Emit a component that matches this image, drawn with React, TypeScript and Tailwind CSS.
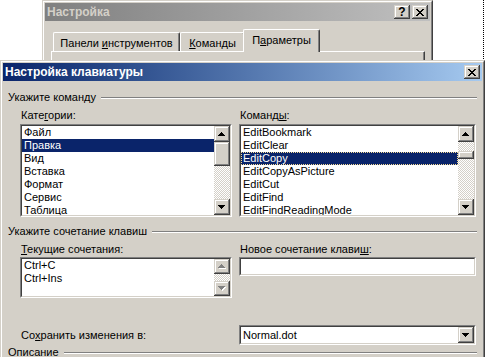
import React from "react";

const raised =
  "bg-[#d4d0c8] shadow-[inset_-1px_-1px_#404040,inset_1px_1px_#d4d0c8,inset_-2px_-2px_#808080,inset_2px_2px_#fff]";
const dither =
  "bg-[image:repeating-conic-gradient(#d4d0c8_0_25%,#fff_0_50%)] bg-size-[2px_2px]";

const UP = "M3 0h1v1H3zM2 1h3v1H2zM1 2h5v1H1zM0 3h7v1H0z";
const DOWN = "M0 0h7v1H0zM1 1h5v1H1zM2 2h3v1H2zM3 3h1v1H3z";

function Arrow({ up, disabled }: { up?: boolean; disabled?: boolean }) {
  const d = up ? UP : DOWN;
  return (
    <svg width="8" height="5" viewBox="0 0 8 5" shapeRendering="crispEdges">
      {disabled && <path d={d} fill="#fff" transform="translate(1 1)" />}
      <path d={d} fill={disabled ? "#808080" : "#000"} />
    </svg>
  );
}

function CloseGlyph() {
  return (
    <svg width="8" height="7" viewBox="0 0 8 7" shapeRendering="crispEdges">
      <path
        d="M0 0h2v1H0zM6 0h2v1H6zM1 1h2v1H1zM5 1h2v1H5zM2 2h4v1H2zM3 3h2v1H3zM2 4h4v1H2zM1 5h2v1H1zM5 5h2v1H5zM0 6h2v1H0zM6 6h2v1H6z"
        fill="#000"
      />
    </svg>
  );
}

function TitleBtn({ children }: { children: React.ReactNode }) {
  return (
    <div className={`${raised} flex h-[14px] w-[16px] items-center justify-center`}>
      {children}
    </div>
  );
}

function Window({ className, children }: { className: string; children: React.ReactNode }) {
  return (
    <div
      className={`absolute border border-t-[#d4d0c8] border-l-[#d4d0c8] border-r-[#404040] border-b-[#404040] bg-[#d4d0c8] ${className}`}
    >
      <div className="flex h-full flex-col border border-t-white border-l-white border-r-[#808080] border-b-[#808080] p-px">
        {children}
      </div>
    </div>
  );
}

function Tab({ className, active, children }: { className: string; active?: boolean; children: React.ReactNode }) {
  return (
    <div
      className={`flex shrink-0 items-center justify-center rounded-t-[2px] border-t border-l border-r border-t-white border-l-white border-r-[#404040] bg-[#d4d0c8] shadow-[inset_-1px_0_#808080] ${
        active ? "relative z-10 -mx-[2px] -mb-px h-[23px] pb-[2px]" : "h-[19px] pt-[2px]"
      } ${className}`}
    >
      <span className="whitespace-nowrap">{children}</span>
    </div>
  );
}

function Sunken({ className = "", children }: { className?: string; children?: React.ReactNode }) {
  return (
    <div className={`border border-t-[#808080] border-l-[#808080] border-r-white border-b-white ${className}`}>
      <div className="flex h-full border border-t-[#404040] border-l-[#404040] border-r-[#d4d0c8] border-b-[#d4d0c8] bg-white">
        {children}
      </div>
    </div>
  );
}

function ScrollBar({
  before,
  thumb,
  disabled,
  btn = "h-[16px]",
}: {
  before?: string;
  thumb?: string;
  disabled?: boolean;
  btn?: string;
}) {
  return (
    <div className="flex w-[16px] shrink-0 flex-col">
      <div className={`${raised} ${btn} flex shrink-0 items-center justify-center`}>
        <Arrow up disabled={disabled} />
      </div>
      {before && <div className={`${dither} ${before} shrink-0`} />}
      {thumb && <div className={`${raised} ${thumb} shrink-0`} />}
      <div className={`${dither} flex-1`} />
      <div className={`${raised} ${btn} flex shrink-0 items-center justify-center`}>
        <Arrow disabled={disabled} />
      </div>
    </div>
  );
}

function Rows({ items, selected, focused }: { items: string[]; selected?: number; focused?: boolean }) {
  return (
    <div className="min-w-0 flex-1 overflow-hidden">
      {items.map((t, i) => (
        <div
          key={t}
          className={`h-[13px] whitespace-nowrap pl-[2px] ${i === selected ? "bg-[#0a246a] text-white" : ""} ${
            i === selected && focused ? "outline-1 -outline-offset-1 outline-dotted outline-[#f5db95]" : ""
          }`}
        >
          {t}
        </div>
      ))}
    </div>
  );
}

function Section({ label, className = "" }: { label: string; className?: string }) {
  return (
    <div className={`flex h-[13px] items-center ${className}`}>
      <span className="pr-[5px]">{label}</span>
      <div className="h-[2px] flex-1 border-t border-b border-t-[#808080] border-b-white" />
    </div>
  );
}

const categories = ["Файл", "Правка", "Вид", "Вставка", "Формат", "Сервис", "Таблица"];
const commands = [
  "EditBookmark",
  "EditClear",
  "EditCopy",
  "EditCopyAsPicture",
  "EditCut",
  "EditFind",
  "EditFindReadingMode",
];

export default function App() {
  return (
    <div className="relative h-[357px] w-[486px] overflow-hidden bg-white font-['Liberation_Sans',Arial,sans-serif] text-[11px] leading-[13px] text-black">
      {/* Настройка (background dialog) */}
      <Window className="left-[42px] top-0 h-[150px] w-[391px]">
        <div className="flex h-[18px] shrink-0 items-center bg-linear-to-r from-[#808080] to-[#c0c0c0] px-[2px]">
          <span className="flex-1 text-[12px] font-bold text-[#d4d0c8]">Настройка</span>
          <div className="flex gap-[2px]">
            <TitleBtn>
              <span className="text-[12px] font-bold leading-none">?</span>
            </TitleBtn>
            <TitleBtn>
              <CloseGlyph />
            </TitleBtn>
          </div>
        </div>
        <div className="flex-1 pt-[8px] pl-[6px] pr-[5px]">
          <div className="flex h-[22px] items-end pl-[2px]">
            <Tab className="w-[127px]">
              Панели <u>и</u>нструментов
            </Tab>
            <Tab className="w-[65px]">
              <u>К</u>оманды
            </Tab>
            <Tab className="w-[77px]" active>
              П<u>а</u>раметры
            </Tab>
          </div>
          <div className="h-[90px] border-t border-l border-r border-t-white border-l-white border-r-[#404040] shadow-[inset_-1px_0_#808080]" />
        </div>
      </Window>

      <div className="absolute left-[483px] top-0 h-[61px] border-l border-dotted border-black" />

      {/* Настройка клавиатуры */}
      <Window className="left-0 top-[60px] h-[310px] w-[485px]">
        <div className="flex h-[18px] shrink-0 items-center bg-linear-to-r from-[#0a246a] to-[#a6caf0] px-[2px]">
          <span className="flex-1 text-[12px] font-bold text-white">Настройка клавиатуры</span>
          <TitleBtn>
            <CloseGlyph />
          </TitleBtn>
        </div>

        <div className="flex-1 px-[5px] pt-[10px]">
          <Section label="Укажите команду" />

          <div className="mt-[5px] grid grid-cols-[212px_237px] gap-x-[7px] pl-[12px]">
            <div className="h-[13px] pl-px">
              Кате<u>г</u>ории:
            </div>
            <div className="h-[13px] pl-px">
              Команд<u>ы</u>:
            </div>
            <Sunken className="mt-[2px] h-[93px]">
              <Rows items={categories} selected={1} />
              <ScrollBar thumb="h-[24px]" />
            </Sunken>
            <Sunken className="mt-[2px] h-[93px]">
              <Rows items={commands} selected={2} focused />
              <ScrollBar before="h-[9px]" thumb="h-[8px]" />
            </Sunken>
          </div>

          <Section label="Укажите сочетание клавиш" className="mt-[8px]" />

          <div className="mt-[5px] grid grid-cols-[212px_237px] items-start gap-x-[7px] pl-[12px]">
            <div className="h-[13px] pl-px">
              <u>Т</u>екущие сочетания:
            </div>
            <div className="h-[13px] pl-px">
              Новое сочетание клави<u>ш</u>:
            </div>
            <Sunken className="mt-px h-[41px]">
              <Rows items={["Ctrl+C", "Ctrl+Ins"]} />
              <ScrollBar disabled btn="h-[15px]" />
            </Sunken>
            <Sunken className="mt-px h-[19px]" />
          </div>

          <div className="mt-[27px] grid grid-cols-[212px_237px] gap-x-[7px] pl-[12px]">
            <div className="flex items-center pl-px">
              Со<u>х</u>ранить изменения в:
            </div>
            <Sunken className="h-[20px]">
              <div className="flex flex-1 items-center pl-[2px]">Normal.dot</div>
              <div className={`${raised} flex w-[16px] items-center justify-center`}>
                <Arrow />
              </div>
            </Sunken>
          </div>

          <Section label="Описание" className="mt-[1px]" />
        </div>
      </Window>
    </div>
  );
}
